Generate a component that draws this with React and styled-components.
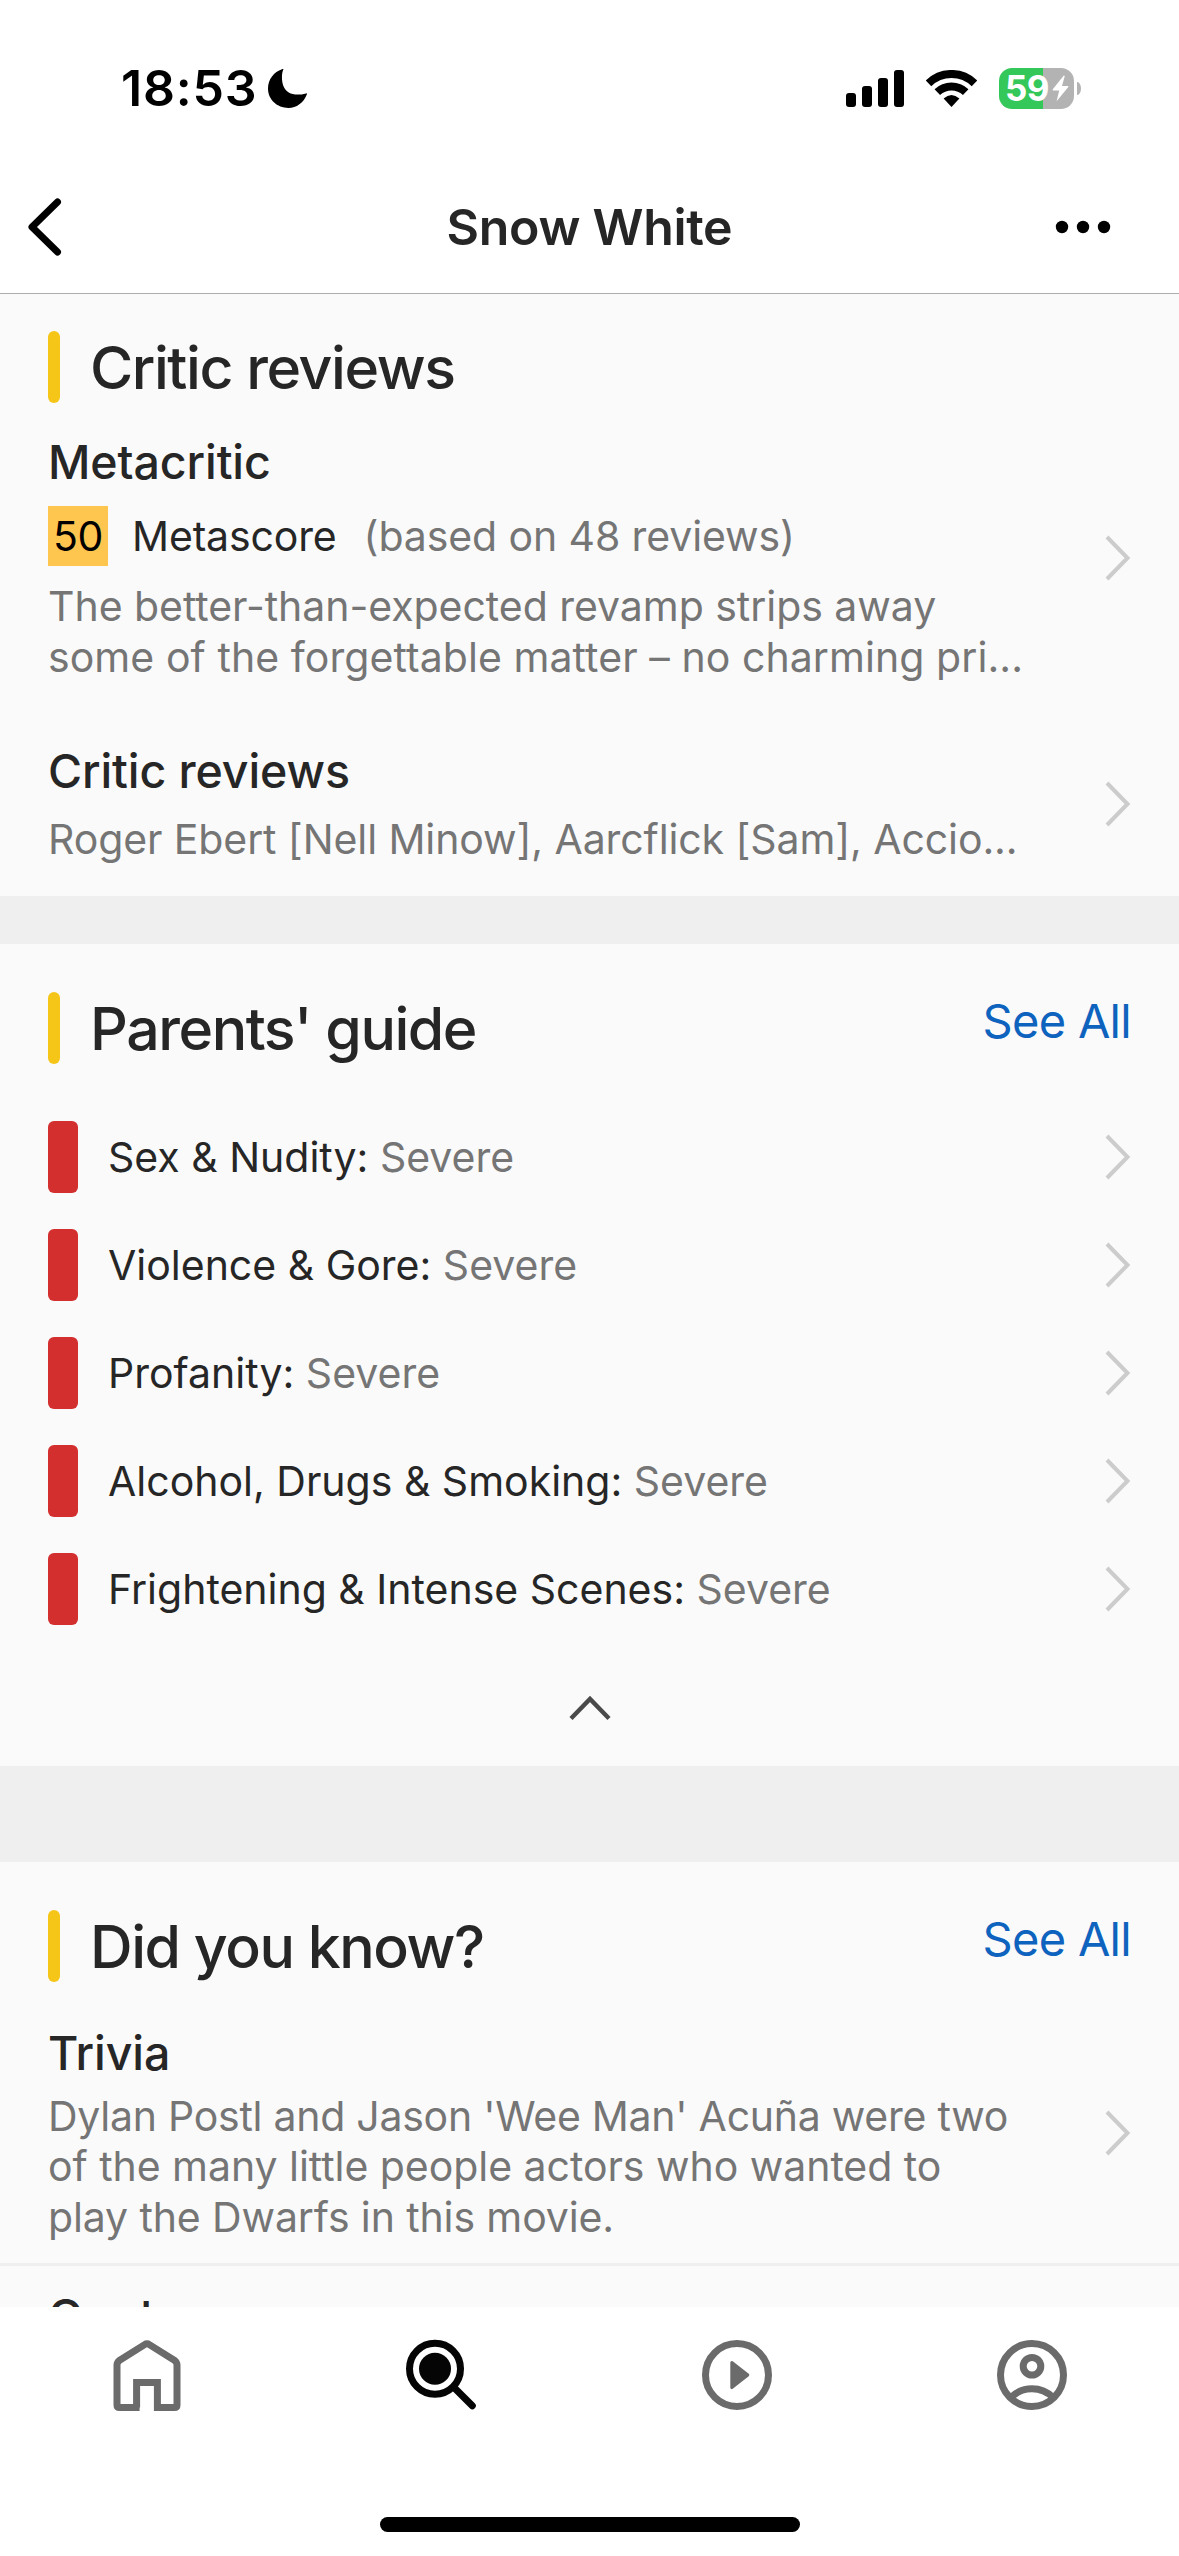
import React from 'react';
import styled, { createGlobalStyle } from 'styled-components';

const guide = [
  { label: 'Sex & Nudity', level: 'Severe' },
  { label: 'Violence & Gore', level: 'Severe' },
  { label: 'Profanity', level: 'Severe' },
  { label: 'Alcohol, Drugs & Smoking', level: 'Severe' },
  { label: 'Frightening & Intense Scenes', level: 'Severe' },
];

const Arrow = () => (
  <ArrowIcon width="26" height="46" viewBox="0 0 26 46">
    <path d="M2 2 L22.5 23 L2 44" />
  </ArrowIcon>
);

const SectionHeader = ({ title, seeAll }) => (
  <Heading>
    <Accent />
    <H2>{title}</H2>
    {seeAll && <SeeAll>See All</SeeAll>}
  </Heading>
);

const StatusIcons = () => (
  <Indicators>
    <svg width="58" height="37" viewBox="0 0 58 37">
      <rect x="0" y="23" width="10" height="14" rx="3" />
      <rect x="16" y="16" width="10" height="21" rx="3" />
      <rect x="32" y="8" width="10" height="29" rx="3" />
      <rect x="48" y="0" width="10" height="37" rx="3" />
    </svg>
    <svg width="51" height="37" viewBox="0 0 51 37">
      <path d="M2.5 13.3 A33 33 0 0 1 48.5 13.3" fill="none" stroke="#000" strokeWidth="8" />
      <path d="M11.3 22.1 A20.7 20.7 0 0 1 39.7 22.1" fill="none" stroke="#000" strokeWidth="8" />
      <path d="M25.5 37 L17.6 28.6 Q25.5 21.6 33.4 28.6 Z" />
    </svg>
    <Battery>
      <BatteryBody>
        59
        <svg width="17" height="27" viewBox="0 0 17 27">
          <path d="M11.8 0.5 L0.8 14.2 Q0.2 15.4 1.4 15.4 L7.2 15.4 L4.6 26.2 L16.3 12 Q16.8 10.9 15.6 10.9 L10 10.9 L12.8 1 Z" fill="#fff" />
        </svg>
      </BatteryBody>
      <BatteryTip />
    </Battery>
  </Indicators>
);

const App = () => {
  return (
    <Screen>
      <GlobalStyle />
      <StatusBar>
        <Time>18:53</Time>
        <svg width="40" height="39" viewBox="0 0 40 39">
          <path d="M15.4 0.6 C13.5 4 13.4 12 15.4 17 C18.4 24.8 27 27.4 38 24.4 C39 24.2 39.2 24.8 38.8 25.6 C35.5 34 28.5 39 20.5 39 C9 39 0 30.6 0 19.6 C0 10.4 6 2.6 14 0.2 C15 -0.1 15.6 0.1 15.4 0.6 Z" />
        </svg>
        <StatusIcons />
      </StatusBar>

      <NavBar>
        <BackIcon width="34" height="58" viewBox="0 0 34 58">
          <path d="M29.5 4 L4 29 L29.5 54" />
        </BackIcon>
        <Title>Snow White</Title>
        <MoreIcon width="56" height="14" viewBox="0 0 56 14">
          <circle cx="7" cy="7" r="6.2" />
          <circle cx="28" cy="7" r="6.2" />
          <circle cx="49" cy="7" r="6.2" />
        </MoreIcon>
      </NavBar>

      <Content>
        <Section $top={37} $bottom={31}>
          <SectionHeader title="Critic reviews" />
          <Item $top={30}>
            <div>
              <H3>Metacritic</H3>
              <Score>
                <Badge>50</Badge>
                <Metascore>Metascore</Metascore>
                <Based>(based on 48 reviews)</Based>
              </Score>
              <Line>The better-than-expected revamp strips away</Line>
              <Line $track={0.07}>some of the forgettable matter – no charming pri...</Line>
            </div>
            <Arrow />
          </Item>
          <Item $top={59}>
            <div>
              <H3 $space={14}>Critic reviews</H3>
              <Line $track={-0.1}>Roger Ebert [Nell Minow], Aarcflick [Sam], Accio...</Line>
            </div>
            <Arrow />
          </Item>
        </Section>

        <Gap $height={48} />

        <Section $top={48}>
          <SectionHeader title="Parents' guide" seeAll />
          <Rows>
            {guide.map(({ label, level }) => (
              <Row key={label}>
                <Chip />
                <Label>{label}: <span>{level}</span></Label>
                <Arrow />
              </Row>
            ))}
          </Rows>
          <Collapse>
            <svg width="42" height="26" viewBox="0 0 42 26">
              <path d="M2 23.5 L21 4 L40 23.5" fill="none" stroke="#4a4a4a" strokeWidth="4.4" />
            </svg>
          </Collapse>
        </Section>

        <Gap $height={96} />

        <Section $top={48}>
          <SectionHeader title="Did you know?" seeAll />
          <Item $top={42}>
            <div>
              <H3 $space={9}>Trivia</H3>
              <Line $tight $track={-0.26}>Dylan Postl and Jason 'Wee Man' Acuña were two</Line>
              <Line $tight>of the many little people actors who wanted to</Line>
              <Line $tight $track={-0.12}>play the Dwarfs in this movie.</Line>
            </div>
            <Arrow />
          </Item>
          <Divider />
          <Item $top={21}>
            <H3>Quotes</H3>
          </Item>
        </Section>
      </Content>

      <TabBar>
        <Tabs>
          <Tab>
            <svg width="72" height="72" viewBox="0 0 72 72">
              <path d="M28.6 68.5 H8.5 Q6 68.5 6 66 V26 Q6 23.5 8.2 21.6 L33.6 5.6 Q36 4 38.4 5.6 L63.8 21.6 Q66 23.5 66 26 V66 Q66 68.5 63.5 68.5 H46.4 V43.5 H25.6 V68.5" />
            </svg>
          </Tab>
          <Tab $active>
            <svg width="72" height="72" viewBox="0 0 72 72">
              <circle cx="29" cy="29.8" r="25.5" />
              <circle cx="29" cy="29.8" r="16" fill="currentColor" stroke="none" />
              <path d="M48 48.5 L66.3 66.8" strokeLinecap="round" />
            </svg>
          </Tab>
          <Tab>
            <svg width="72" height="72" viewBox="0 0 72 72">
              <circle cx="36" cy="36" r="31.5" />
              <PlayShape d="M30.8 23.4 L46.8 36 L30.8 48.6 Z" />
            </svg>
          </Tab>
          <Tab>
            <svg width="72" height="72" viewBox="0 0 72 72">
              <circle cx="36" cy="36" r="31.5" />
              <circle cx="36" cy="27.3" r="8.8" />
              <path d="M15 58.5 C26.5 46.8 45.5 46.8 57 58.5" />
            </svg>
          </Tab>
        </Tabs>
        <HomeIndicator />
      </TabBar>
    </Screen>
  );
};

const GlobalStyle = createGlobalStyle`
  * {
    box-sizing: border-box;
  }

  body {
    margin: 0;
    background: #fff;
    color: #262626;
    font-family: Inter, 'Liberation Sans', sans-serif;
    -webkit-font-smoothing: antialiased;
  }

  svg {
    display: block;
    flex-shrink: 0;
  }
`;

const Screen = styled.div`
  display: flex;
  flex-direction: column;
  width: 1179px;
  height: 2556px;
  overflow: hidden;
`;

const StatusBar = styled.div`
  display: flex;
  align-items: center;
  height: 176px;
  padding: 0 98px 0 121px;
`;

const Time = styled.div`
  width: 147px;
  color: #000;
  font-size: 50px;
  font-weight: 600;
  letter-spacing: 0.8px;
`;

const Indicators = styled.div`
  display: flex;
  align-items: center;
  gap: 22px;
  margin-left: auto;
`;

const Battery = styled.div`
  display: flex;
  align-items: center;
  gap: 3px;
`;

const BatteryBody = styled.div`
  display: flex;
  align-items: center;
  justify-content: space-between;
  width: 75px;
  height: 41px;
  padding: 0 5px 0 6px;
  border-radius: 13px;
  background: linear-gradient(to right, #34c759 44px, #b3b3b3 44px);
  color: #fff;
  font-size: 35px;
  font-weight: 700;
  letter-spacing: -0.5px;
`;

const BatteryTip = styled.div`
  width: 4px;
  height: 13px;
  border-radius: 0 4px 4px 0 / 0 7px 7px 0;
  background: #b3b3b3;
`;

const NavBar = styled.div`
  display: grid;
  grid-template-columns: 1fr auto 1fr;
  align-items: center;
  height: 118px;
  padding: 0 68px 15px 28px;
  border-bottom: 1px solid #adadad;
`;

const BackIcon = styled.svg`
  fill: none;
  stroke: #000;
  stroke-width: 7;
  stroke-linecap: round;
  stroke-linejoin: round;
`;

const Title = styled.h1`
  margin: 0 0 0 40px;
  font-size: 50px;
  font-weight: 570;
  letter-spacing: -0.3px;
`;

const MoreIcon = styled.svg`
  justify-self: end;
`;

const Content = styled.main`
  flex: 1;
  min-height: 0;
  overflow: hidden;
  background: #fafafa;
`;

const Section = styled.section`
  padding-top: ${({ $top }) => $top}px;
  padding-bottom: ${({ $bottom = 0 }) => $bottom}px;
`;

const Gap = styled.div`
  height: ${({ $height }) => $height}px;
  background: #efefef;
`;

const Heading = styled.div`
  display: flex;
  align-items: center;
  height: 72px;
  padding: 0 48px;
`;

const Accent = styled.div`
  width: 12px;
  height: 72px;
  margin-right: 30px;
  border-radius: 6px;
  background: #f5c518;
`;

const H2 = styled.h2`
  margin: 0;
  font-size: 59px;
  font-weight: 500;
  letter-spacing: -1.45px;
`;

const SeeAll = styled.a`
  align-self: flex-start;
  margin-left: auto;
  color: #0e63be;
  font-size: 47px;
  line-height: 58px;
  letter-spacing: -0.7px;
`;

const Item = styled.div`
  display: flex;
  align-items: center;
  justify-content: space-between;
  padding: ${({ $top }) => $top}px 48px 0;
`;

const H3 = styled.h3`
  margin: 0 0 ${({ $space = 15 }) => $space}px;
  font-size: 46.5px;
  font-weight: 500;
  line-height: 58px;
  letter-spacing: -0.1px;
`;

const Score = styled.div`
  display: flex;
  align-items: center;
  margin-bottom: 15px;
  font-size: 41px;
`;

const Badge = styled.div`
  width: 60px;
  height: 60px;
  background: #ffc64f;
  color: #000;
  line-height: 60px;
  letter-spacing: -0.4px;
  text-align: center;
`;

const Metascore = styled.span`
  margin-left: 24px;
  letter-spacing: -0.15px;
`;

const Based = styled.span`
  margin-left: 27px;
  color: #757575;
  letter-spacing: -0.1px;
`;

const Line = styled.div`
  color: #757575;
  font-size: 41px;
  line-height: ${({ $tight }) => ($tight ? 50.4 : 51)}px;
  letter-spacing: ${({ $track = -0.04 }) => $track}px;
  white-space: nowrap;
`;

const ArrowIcon = styled.svg`
  fill: none;
  stroke: #ccc;
  stroke-width: 4;
`;

const Rows = styled.div`
  display: grid;
  gap: 36px;
  padding: 57px 48px 0;
`;

const Row = styled.div`
  display: flex;
  align-items: center;
  height: 72px;
`;

const Chip = styled.div`
  width: 30px;
  height: 72px;
  border-radius: 6px;
  background: #d32f2f;
`;

const Label = styled.div`
  flex: 1;
  margin-left: 30px;
  font-size: 41px;

  span {
    color: #757575;
  }
`;

const Collapse = styled.div`
  display: flex;
  justify-content: center;
  height: 141px;
  padding-top: 70px;
`;

const Divider = styled.div`
  height: 3px;
  margin-top: 21px;
  background: #efefef;
`;

const TabBar = styled.nav`
  display: flex;
  flex-direction: column;
  align-items: center;
  justify-content: space-between;
  height: 249px;
  padding: 32px 0 24px;
`;

const Tabs = styled.div`
  display: grid;
  grid-template-columns: repeat(4, 1fr);
  width: 100%;
`;

const Tab = styled.div`
  display: flex;
  justify-content: center;
  color: ${({ $active }) => ($active ? '#050505' : '#6b6b6b')};

  svg {
    fill: none;
    stroke: currentColor;
    stroke-width: 7;
  }
`;

const PlayShape = styled.path`
  fill: currentColor;
  stroke-width: 3;
  stroke-linejoin: round;
`;

const HomeIndicator = styled.div`
  width: 420px;
  height: 15px;
  border-radius: 8px;
  background: #000;
`;

export default App;
